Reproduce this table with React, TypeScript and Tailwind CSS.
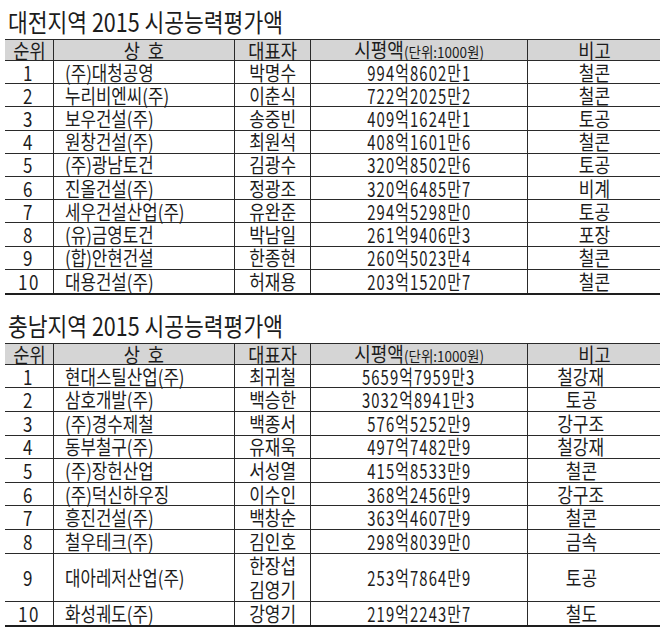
import React from 'react';

type Row = { rank: string; name: string; ceo: string[]; amount: string; note: string };

const daejeon: Row[] = [
  { rank: '1', name: '(주)대청공영', ceo: ['박명수'], amount: '994억8602만1', note: '철콘' },
  { rank: '2', name: '누리비엔씨(주)', ceo: ['이춘식'], amount: '722억2025만2', note: '철콘' },
  { rank: '3', name: '보우건설(주)', ceo: ['송중빈'], amount: '409억1624만1', note: '토공' },
  { rank: '4', name: '원창건설(주)', ceo: ['최원석'], amount: '408억1601만6', note: '철콘' },
  { rank: '5', name: '(주)광남토건', ceo: ['김광수'], amount: '320억8502만6', note: '토공' },
  { rank: '6', name: '진올건설(주)', ceo: ['정광조'], amount: '320억6485만7', note: '비계' },
  { rank: '7', name: '세우건설산업(주)', ceo: ['유완준'], amount: '294억5298만0', note: '토공' },
  { rank: '8', name: '(유)금영토건', ceo: ['박남일'], amount: '261억9406만3', note: '포장' },
  { rank: '9', name: '(합)안현건설', ceo: ['한종현'], amount: '260억5023만4', note: '철콘' },
  { rank: '10', name: '대용건설(주)', ceo: ['허재용'], amount: '203억1520만7', note: '철콘' },
];

const chungnam: Row[] = [
  { rank: '1', name: '현대스틸산업(주)', ceo: ['최귀철'], amount: '5659억7959만3', note: '철강재' },
  { rank: '2', name: '삼호개발(주)', ceo: ['백승한'], amount: '3032억8941만3', note: '토공' },
  { rank: '3', name: '(주)경수제철', ceo: ['백종서'], amount: '576억5252만9', note: '강구조' },
  { rank: '4', name: '동부철구(주)', ceo: ['유재욱'], amount: '497억7482만9', note: '철강재' },
  { rank: '5', name: '(주)장헌산업', ceo: ['서성열'], amount: '415억8533만9', note: '철콘' },
  { rank: '6', name: '(주)덕신하우징', ceo: ['이수인'], amount: '368억2456만9', note: '강구조' },
  { rank: '7', name: '흥진건설(주)', ceo: ['백창순'], amount: '363억4607만9', note: '철콘' },
  { rank: '8', name: '철우테크(주)', ceo: ['김인호'], amount: '298억8039만0', note: '금속' },
  { rank: '9', name: '대아레저산업(주)', ceo: ['한장섭', '김영기'], amount: '253억7864만9', note: '토공' },
  { rank: '10', name: '화성궤도(주)', ceo: ['강영기'], amount: '219억2243만7', note: '철도' },
];

// 표 칸 너비: 순위 / 상호 / 대표자 / 시평액 / 비고
const grid = 'grid grid-cols-[48px_181px_76px_217px_133px]';

const Title = ({ text, className = '' }: { text: string; className?: string }) => (
  <div className={`h-[39px] flex items-center pl-[8px] pt-[3px] ${className}`}>
    <span className="inline-block origin-left scale-x-[0.86] whitespace-nowrap text-[25px] leading-[30px] text-[#1c1c1c]">
      {text}
    </span>
  </div>
);

const Header = () => (
  <div className={`${grid} h-[22px] bg-[#d5d5d5] border-t border-b border-[#2a2a2a] text-[20px] leading-[20px]`}>
    <div className="flex items-center justify-center">
      <span className="inline-block scale-x-[0.88] whitespace-nowrap">순위</span>
    </div>
    <div className="flex items-center justify-center border-l border-[#2a2a2a]">
      <span className="inline-block scale-x-[0.88] whitespace-nowrap">상&nbsp;&nbsp;호</span>
    </div>
    <div className="flex items-center justify-center border-l border-[#2a2a2a]">
      <span className="inline-block scale-x-[0.88] whitespace-nowrap">대표자</span>
    </div>
    <div className="flex items-center justify-center border-l border-[#2a2a2a]">
      <span className="inline-block scale-x-[0.9] whitespace-nowrap">
        시평액<span className="text-[15px]">(단위:1000원)</span>
      </span>
    </div>
    <div className="flex items-center justify-center border-l border-[#2a2a2a]">
      <span className="inline-block scale-x-[0.88] whitespace-nowrap">비고</span>
    </div>
  </div>
);

const Table = ({ rows, rowH, noteShift }: { rows: Row[]; rowH: string; noteShift?: boolean }) => (
  <div className="ml-[5px] w-[655px] border-b-2 border-[#1e1e1e]">
    <Header />
    {rows.map((r, i) => {
      const last = i === rows.length - 1;
      const double = r.ceo.length > 1;
      return (
        <div
          key={r.rank}
          className={`${grid} ${double ? 'h-[48px]' : rowH} ${last ? '' : 'border-b border-[#2a2a2a]'} text-[20px] leading-[21px] text-[#1c1c1c]`}
        >
          <div className="flex items-center justify-center">
            <span className="inline-block scale-x-[0.85] tracking-[2px] whitespace-nowrap">{r.rank}</span>
          </div>
          <div className="flex items-center pl-[11px] border-l border-[#2a2a2a]">
            <span className="inline-block origin-left scale-x-[0.84] whitespace-nowrap">{r.name}</span>
          </div>
          <div className="flex flex-col items-center justify-center gap-[3px] border-l border-[#2a2a2a]">
            {r.ceo.map(c => (
              <span key={c} className="inline-block scale-x-[0.85] whitespace-nowrap">{c}</span>
            ))}
          </div>
          <div className="flex items-center justify-center border-l border-[#2a2a2a]">
            <span className="inline-block scale-x-[0.74] tracking-[1.5px] whitespace-nowrap">{r.amount}</span>
          </div>
          <div className={`flex items-center justify-center border-l border-[#2a2a2a] ${noteShift ? 'pr-[26px]' : ''}`}>
            <span className="inline-block scale-x-[0.85] whitespace-nowrap">{r.note}</span>
          </div>
        </div>
      );
    })}
  </div>
);

const App: React.FC = () => {
  return (
    <div className="w-[668px] h-[644px] bg-white overflow-hidden font-['Noto_Sans_CJK_KR','Noto_Sans',sans-serif] text-[#1c1c1c]">
      <Title text="대전지역 2015 시공능력평가액" />
      <Table rows={daejeon} rowH="h-[23.2px]" />
      <Title text="충남지역 2015 시공능력평가액" className="mt-[9px]" />
      <Table rows={chungnam} rowH="h-[23.6px]" noteShift />
    </div>
  );
};

export default App;
